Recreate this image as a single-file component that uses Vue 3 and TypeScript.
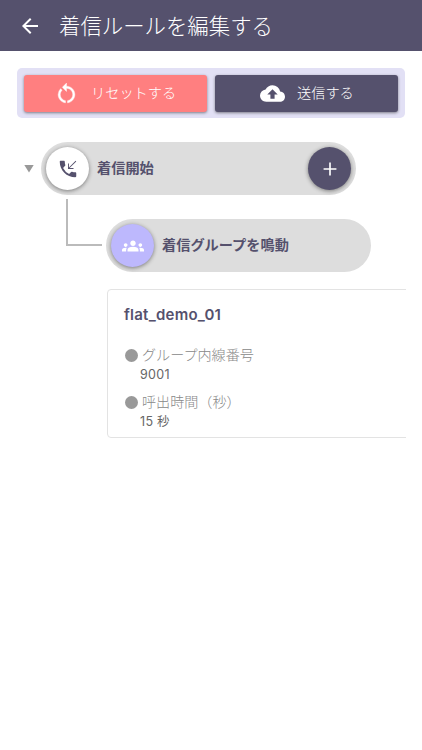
<script setup lang="ts">
interface Detail {
  label: string
  value: string
}

const title = '着信ルールを編集する'
const groupName = 'flat_demo_01'
const details: Detail[] = [
  { label: 'グループ内線番号', value: '9001' },
  { label: '呼出時間（秒）', value: '15 秒' },
]
</script>

<template>
  <div class="screen">
    <header class="header">
      <svg class="back" viewBox="0 0 24 24"><path d="M20 11H7.83l5.59-5.59L12 4l-8 8 8 8 1.41-1.41L7.83 13H20v-2z" /></svg>
      <h1>{{ title }}</h1>
    </header>

    <main>
      <div class="toolbar">
        <button class="btn reset">
          <svg viewBox="0 0 24 24"><path d="M12 5V2L8 6l4 4V7c3.31 0 6 2.69 6 6 0 2.97-2.17 5.43-5 5.91v2.02c3.95-.49 7-3.85 7-7.93 0-4.42-3.58-8-8-8zm-6 8c0-1.65.67-3.15 1.76-4.24L6.34 7.34A8.014 8.014 0 004 13c0 4.08 3.05 7.44 7 7.93v-2.02c-2.83-.48-5-2.94-5-5.91z" /></svg>
          <span>リセットする</span>
        </button>
        <button class="btn send">
          <svg viewBox="0 0 24 24"><path d="M19.35 10.04A7.49 7.49 0 0012 4C9.11 4 6.6 5.64 5.35 8.04A5.994 5.994 0 000 14c0 3.31 2.69 6 6 6h13c2.76 0 5-2.24 5-5 0-2.64-2.05-4.78-4.65-4.96zM14 13v4h-4v-4H7l5-5 5 5h-3z" /></svg>
          <span>送信する</span>
        </button>
      </div>

      <section class="flow">
        <div class="root-row">
          <span class="toggle"></span>
          <div class="pill">
            <span class="circle phone">
              <svg viewBox="0 0 24 24">
                <path d="M20 15.5c-1.25 0-2.45-.2-3.57-.57a1.02 1.02 0 00-1.02.24l-2.2 2.2a15.074 15.074 0 01-6.59-6.59l2.2-2.2c.28-.28.36-.67.25-1.02A11.36 11.36 0 018.5 4c0-.55-.45-1-1-1H4c-.55 0-1 .45-1 1 0 9.39 7.61 17 17 17 .55 0 1-.45 1-1v-3.5c0-.55-.45-1-1-1z" />
                <path d="M20.3 3L13 10.3V6h-1v6h6v-1h-4.3L21 3.7z" />
              </svg>
            </span>
            <span class="label">着信開始</span>
            <button class="circle add"><svg viewBox="0 0 24 24"><path d="M19 12.9h-6.1V19h-1.8v-6.1H5v-1.8h6.1V5h1.8v6.1H19z" /></svg></button>
          </div>
        </div>

        <div class="child-row">
          <span class="connector"></span>
          <div class="pill">
            <span class="circle group">
              <svg viewBox="0 0 24 24"><path d="M12 12.75c1.63 0 3.07.39 4.24.9 1.08.48 1.76 1.56 1.76 2.73V18H6v-1.61c0-1.18.68-2.26 1.76-2.73 1.17-.52 2.61-.91 4.24-.91zM4 13c1.1 0 2-.9 2-2s-.9-2-2-2-2 .9-2 2 .9 2 2 2zm1.13 1.1c-.37-.06-.74-.1-1.13-.1-.99 0-1.93.21-2.78.58A2.01 2.01 0 000 16.43V18h4.5v-1.61c0-.83.23-1.61.63-2.29zM20 13c1.1 0 2-.9 2-2s-.9-2-2-2-2 .9-2 2 .9 2 2 2zm4 3.43c0-.81-.48-1.53-1.22-1.85A6.95 6.95 0 0020 14c-.39 0-.76.04-1.13.1.4.68.63 1.46.63 2.29V18H24v-1.57zM12 6c1.66 0 3 1.34 3 3s-1.34 3-3 3-3-1.34-3-3 1.34-3 3-3z" /></svg>
            </span>
            <span class="label">着信グループを鳴動</span>
          </div>
        </div>

        <article class="card">
          <h2>{{ groupName }}</h2>
          <dl>
            <div v-for="item in details" :key="item.label" class="detail">
              <dt><i class="dot"></i><span>{{ item.label }}</span></dt>
              <dd>{{ item.value }}</dd>
            </div>
          </dl>
        </article>
      </section>
    </main>
  </div>
</template>

<style>
body {
  background: #fff;
}
</style>

<style scoped>
.screen {
  width: 422px;
  height: 750px;
  overflow: hidden;
  background: #fff;
  font-family: "Noto Sans CJK JP", sans-serif;
  color: #55516d;
}
.screen * {
  box-sizing: border-box;
}
svg {
  display: block;
  flex: none;
  fill: currentColor;
}
button {
  border: 0;
  padding: 0;
  font: inherit;
}
.header {
  display: flex;
  align-items: center;
  height: 51px;
  padding-left: 18px;
  background: #55516d;
  color: #fff;
}
.back {
  width: 24px;
  height: 24px;
}
h1 {
  margin: 0 0 2px 17px;
  font-size: 21.4px;
  line-height: 32px;
  font-weight: 300;
  white-space: nowrap;
}
main {
  padding: 17px 17px 0;
}
.toolbar {
  display: flex;
  gap: 8px;
  width: 388px;
  height: 50px;
  padding: 7px 7px 6px;
  border-radius: 5px;
  background: #e2e0f5;
}
.btn {
  display: flex;
  flex: none;
  width: 183px;
  align-items: center;
  border-radius: 3px;
  color: #fff;
  font-size: 14.2px;
  font-weight: 300;
  line-height: 20px;
  padding-bottom: 1px;
  box-shadow: 0 1px 3px rgba(0, 0, 0, 0.45);
}
.btn svg {
  width: 25px;
  height: 25px;
}
.btn span {
  margin: 0 0 2px 12px;
}
.reset {
  padding-left: 30px;
  background: #ff7f80;
}
.reset svg {
  stroke: currentColor;
  stroke-width: 0.4;
}
.send {
  padding-left: 45px;
  background: #55516d;
}
.flow {
  width: 388.5px;
  padding-top: 24px;
  overflow: hidden;
}
.root-row {
  display: flex;
  align-items: center;
  padding-left: 7px;
}
.toggle {
  width: 10px;
  height: 8px;
  margin-right: 7px;
  background: #999;
  clip-path: polygon(0 0, 100% 0, 50% 100%);
}
.pill {
  display: flex;
  flex: none;
  align-items: center;
  width: 315px;
  height: 53px;
  padding: 0 5px;
  border-radius: 27px;
  background: #ddd;
}
.circle {
  display: grid;
  flex: none;
  place-items: center;
  width: 43px;
  height: 43px;
  border-radius: 50%;
  box-shadow: 0 1px 4px rgba(0, 0, 0, 0.45);
}
.phone {
  background: #fff;
  color: #55516d;
}
.phone svg {
  width: 22px;
  height: 22px;
}
.label {
  margin: 0 0 4px 8px;
  font-size: 14.2px;
  line-height: 20px;
  font-weight: 700;
  white-space: nowrap;
}
.add {
  margin-left: auto;
  background: #55516d;
  color: #fff;
}
.add svg {
  width: 22px;
  height: 22px;
}
.child-row {
  display: flex;
  padding: 4px 0 0 49px;
}
.connector {
  width: 36px;
  height: 47px;
  border: solid #bbb;
  border-width: 0 0 2px 2px;
}
.child-row .pill {
  width: 265px;
  margin: 20px 0 0 4px;
}
.group {
  background: #bdb8fd;
  color: #fff;
}
.group svg {
  width: 22px;
  height: 22px;
}
.card {
  width: 360px;
  height: 149px;
  margin: 17px 0 0 90px;
  padding: 15px 16px 0;
  border: 1.5px solid #e3e3e3;
  border-radius: 4px;
}
h2 {
  margin: 0;
  font-family: Inter, "Noto Sans CJK JP", sans-serif;
  font-size: 15px;
  line-height: 20px;
  font-weight: 600;
  letter-spacing: 0.25px;
}
dl {
  margin: 20px 0 0;
}
.detail {
  height: 47px;
}
dt {
  display: flex;
  align-items: center;
  height: 20px;
  font-size: 14.1px;
  line-height: 18px;
  font-weight: 300;
  color: #888;
}
dt span {
  margin-bottom: 2px;
}
.dot {
  width: 13px;
  height: 13px;
  margin: 0 4px 0 1px;
  border-radius: 50%;
  background: #999;
}
dd {
  margin: 1px 0 0 16px;
  font-family: Inter, "Noto Sans CJK JP", sans-serif;
  font-size: 12.5px;
  line-height: 18px;
  letter-spacing: 0.3px;
  color: #666;
}
</style>
